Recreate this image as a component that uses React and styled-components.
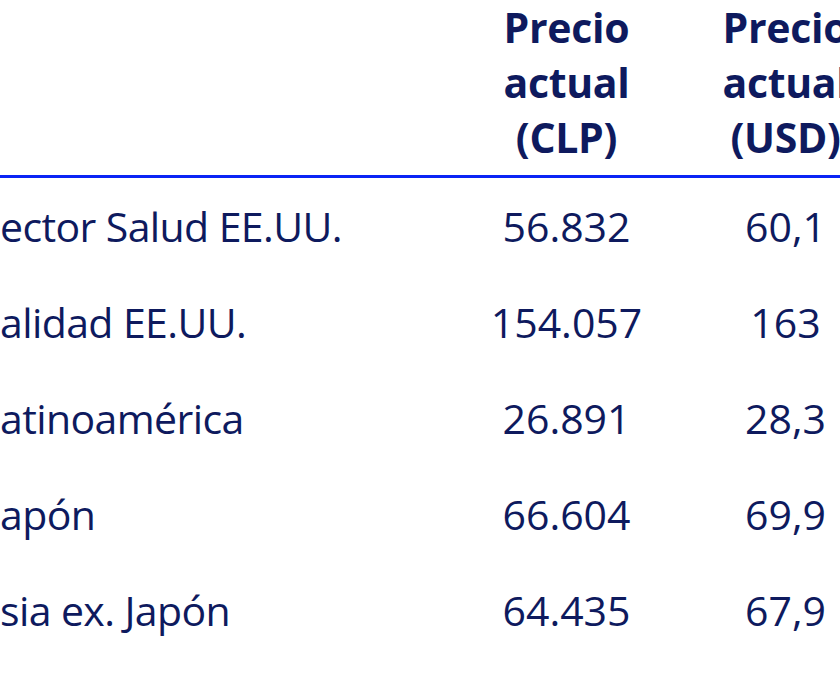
import React from 'react';
import styled, { createGlobalStyle } from 'styled-components';

const GlobalStyle = createGlobalStyle`
  html, body {
    margin: 0;
    padding: 0;
    background: #ffffff;
    overflow: hidden;
  }
  body {
    font-family: 'Open Sans', 'Noto Sans', sans-serif;
    color: #0e1a5e;
  }
`;

const Page = styled.div`
  width: 840px;
  height: 688px;
  overflow: hidden;
  background: #ffffff;
`;

const Table = styled.div`
  display: grid;
  grid-template-columns: 457px 219px 219px;
  width: 895px;
`;

const HeadCell = styled.div`
  display: flex;
  align-items: flex-end;
  justify-content: center;
  text-align: center;
  height: 178px;
  box-sizing: border-box;
  padding-bottom: 10px;
  border-bottom: 3px solid #0a24f5;
  font-size: 41px;
  font-weight: 700;
  line-height: 55px;
  letter-spacing: -0.3px;
  color: #0e1a5e;
`;

const Cell = styled.div`
  display: flex;
  align-items: center;
  justify-content: ${({ $label }) => ($label ? 'flex-start' : 'center')};
  height: 96px;
  font-size: 41px;
  font-weight: 400;
  letter-spacing: ${({ $label }) => ($label ? '-0.6px' : '0')};
  white-space: nowrap;
  overflow: hidden;
  color: #0e1a5e;
`;

const rows = [
  { name: 'ector Salud EE.UU.', clp: '56.832', usd: '60,1' },
  { name: 'alidad EE.UU.', clp: '154.057', usd: '163' },
  { name: 'atinoamérica', clp: '26.891', usd: '28,3' },
  { name: 'apón', clp: '66.604', usd: '69,9' },
  { name: 'sia ex. Japón', clp: '64.435', usd: '67,9' },
];

export default function App() {
  return (
    <Page>
      <GlobalStyle />
      <Table>
        <HeadCell />
        <HeadCell>
          Precio
          <br />
          actual
          <br />
          (CLP)
        </HeadCell>
        <HeadCell>
          Precio
          <br />
          actual
          <br />
          (USD)
        </HeadCell>
        {rows.map((r) => (
          <React.Fragment key={r.clp}>
            <Cell $label>{r.name}</Cell>
            <Cell>{r.clp}</Cell>
            <Cell>{r.usd}</Cell>
          </React.Fragment>
        ))}
      </Table>
    </Page>
  );
}
